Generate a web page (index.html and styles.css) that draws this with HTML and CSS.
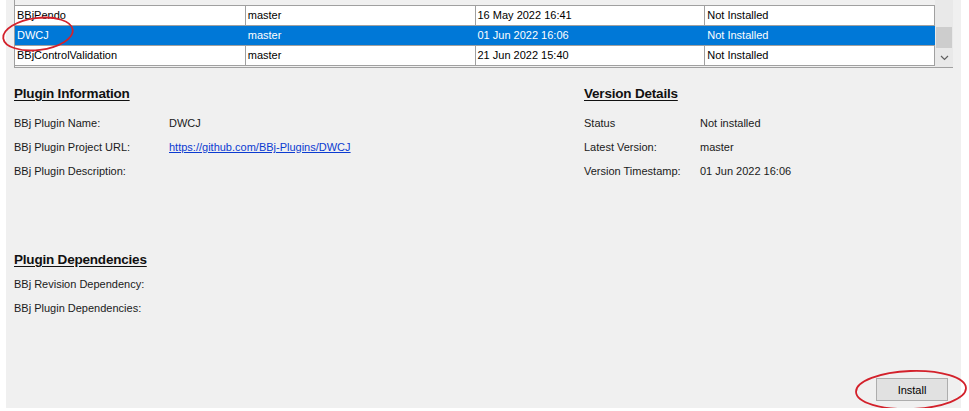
FILE: index.html
```html
<!DOCTYPE html>
<html>
<head>
<meta charset="utf-8">
<link rel="stylesheet" href="styles.css">
</head>
<body>
<div class="window">
  <div class="listbox">
    <div class="rows">
      <div class="row">
        <div class="cell">BBjPendo</div>
        <div class="cell">master</div>
        <div class="cell">16 May 2022 16:41</div>
        <div class="cell">Not Installed</div>
      </div>
      <div class="row selected">
        <div class="cell">DWCJ</div>
        <div class="cell">master</div>
        <div class="cell">01 Jun 2022 16:06</div>
        <div class="cell">Not Installed</div>
      </div>
      <div class="row last">
        <div class="cell">BBjControlValidation</div>
        <div class="cell">master</div>
        <div class="cell">21 Jun 2022 15:40</div>
        <div class="cell">Not Installed</div>
      </div>
    </div>
    <div class="scrollbar">
      <div class="thumb"></div>
      <svg class="arrow" width="9" height="6" viewBox="0 0 9 6"><path d="M1 1 L4.5 4.5 L8 1" fill="none" stroke="#606060" stroke-width="1.2"/></svg>
    </div>
  </div>

  <div class="details">
    <div class="col left">
      <h2 class="heading">Plugin Information</h2>
      <div class="field"><span class="label">BBj Plugin Name:</span><span class="value">DWCJ</span></div>
      <div class="field"><span class="label">BBj Plugin Project URL:</span><a class="value link" href="#">https://github.com/BBj-Plugins/DWCJ</a></div>
      <div class="field"><span class="label">BBj Plugin Description:</span><span class="value"></span></div>
    </div>
    <div class="col right">
      <h2 class="heading">Version Details</h2>
      <div class="field"><span class="label narrow">Status</span><span class="value">Not installed</span></div>
      <div class="field"><span class="label narrow">Latest Version:</span><span class="value">master</span></div>
      <div class="field"><span class="label narrow">Version Timestamp:</span><span class="value">01 Jun 2022 16:06</span></div>
    </div>
  </div>

  <div class="deps">
    <h2 class="heading">Plugin Dependencies</h2>
    <div class="field tight"><span class="label">BBj Revision Dependency:</span></div>
    <div class="field tight"><span class="label">BBj Plugin Dependencies:</span></div>
  </div>

  <button class="install">Install</button>

  <svg class="mark mark-one" width="80" height="46" viewBox="0 0 80 46"><ellipse cx="38" cy="23" rx="35" ry="16" transform="rotate(-7 38 23)" fill="none" stroke="#d3212b" stroke-width="1.8"/></svg>
  <svg class="mark mark-two" width="120" height="46" viewBox="0 0 120 46"><ellipse cx="58" cy="22" rx="55" ry="19" transform="rotate(-2 58 22)" fill="none" stroke="#d3212b" stroke-width="1.8"/></svg>
</div>
</body>
</html>
```
FILE: styles.css
```css
html, body {
  margin: 0;
  padding: 0;
  background: #ffffff;
}

body {
  font-family: "Liberation Sans", Arial, sans-serif;
  font-size: 11px;
  color: #000;
}

.window {
  position: relative;
  margin-left: 6px;
  width: 955px;
  height: 408px;
  background: #f0f0f0;
  display: flex;
  flex-direction: column;
  box-sizing: border-box;
  padding-left: 8px;
}

.listbox {
  display: flex;
  width: 939px;
  height: 68px;
  border-left: 1px solid #a0a0a0;
  border-bottom: 1px solid #a0a0a0;
  box-sizing: border-box;
}

.rows {
  width: 920px;
  padding-top: 5px;
  background: #f0f0f0;
}

.row {
  display: flex;
  height: 20px;
  box-sizing: border-box;
  border-top: 1px solid #a0a0a0;
  background: #fff;
}

.row.last {
  border-bottom: 1px solid #a0a0a0;
  height: 21px;
}

.cell {
  width: 230px;
  box-sizing: border-box;
  padding-left: 2px;
  line-height: 19px;
  white-space: nowrap;
  overflow: hidden;
}

.cell + .cell {
  border-left: 1px solid #a0a0a0;
}

.cell:last-child {
  border-right: 1px solid #a0a0a0;
  width: 231px;
}

.row.selected {
  background: #0078d7;
  color: #fff;
  border-top-color: #a0a0a0;
}

.row.selected .cell + .cell,
.row.selected .cell:last-child {
  border-color: #0078d7;
}

.scrollbar {
  position: relative;
  width: 18px;
  background: #e9e9e9;
  display: flex;
  flex-direction: column;
  align-items: center;
}

.thumb {
  margin-top: 27px;
  width: 16px;
  height: 21px;
  background: #cdcdcd;
}

.arrow {
  margin-top: 7px;
}

.details {
  display: grid;
  grid-template-columns: 570px 1fr;
  margin-top: 18px;
}

.heading {
  margin: 0 0 9px 0;
  font-size: 13.5px;
  font-weight: bold;
  line-height: 16px;
  letter-spacing: -0.2px;
  text-decoration: underline;
  text-underline-offset: 2px;
  color: #111;
}

.field {
  display: flex;
  height: 24px;
  line-height: 24px;
  color: #1a1a1a;
}

.label {
  width: 155px;
  flex-shrink: 0;
}

.label.narrow {
  width: 116px;
}

.link {
  color: #0b3bd1;
  text-decoration: underline;
}

.deps {
  margin-top: 69px;
}

.deps .heading {
  margin-bottom: 4px;
}

.install {
  margin-top: auto;
  align-self: flex-end;
  margin-right: 13px;
  margin-bottom: 7px;
  width: 72px;
  height: 23px;
  background: #e1e1e1;
  border: 1px solid #adadad;
  font-family: "Liberation Sans", Arial, sans-serif;
  font-size: 11px;
  color: #000;
  padding: 0;
}

.mark {
  position: absolute;
  pointer-events: none;
}

.mark-one {
  left: -6px;
  top: 11px;
}

.mark-two {
  left: 847px;
  top: 368px;
}
```
